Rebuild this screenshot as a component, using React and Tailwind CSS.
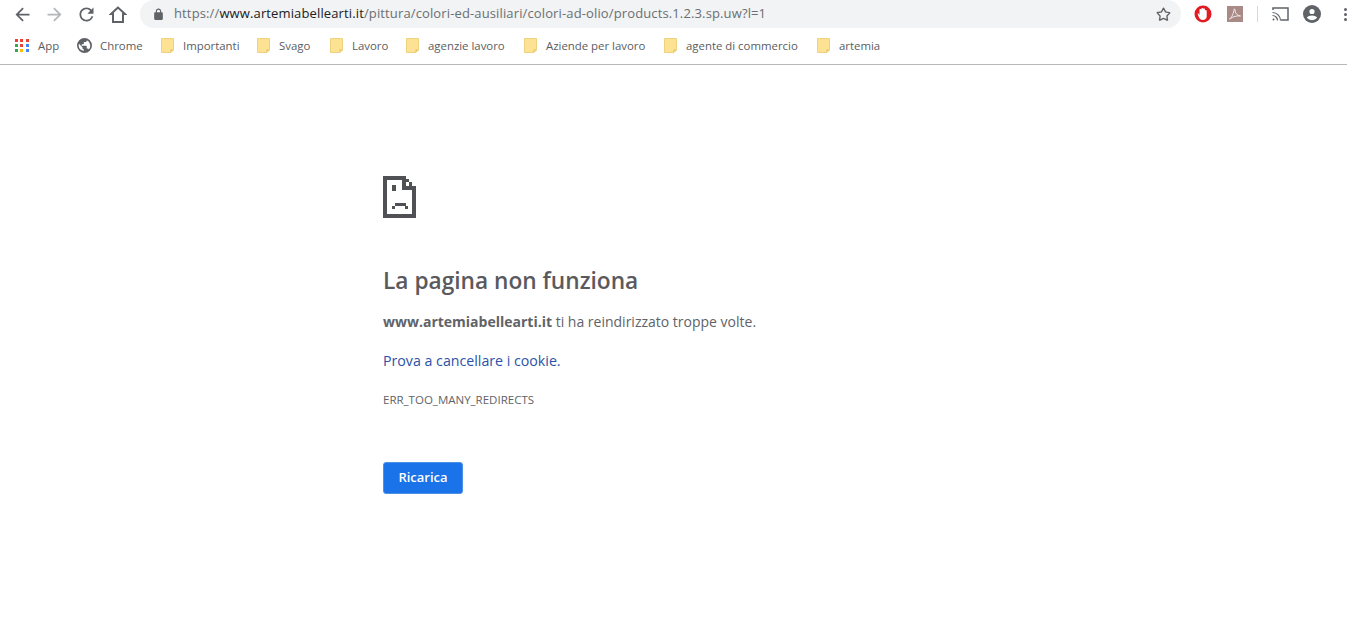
import { Star } from 'lucide-react'

const bookmarks = [
    { label: 'Importanti', gap: 'w-[74px]' },
    { label: 'Svago', gap: 'w-[51px]' },
    { label: 'Lavoro', gap: 'w-[54px]' },
    { label: 'agenzie lavoro', gap: 'w-[96px]' },
    { label: 'Aziende per lavoro', gap: 'w-[118px]' },
    { label: 'agente di commercio', gap: 'w-[131px]' },
    { label: 'artemia', gap: 'w-[50px]' },
]

function Glyph({ d, size = 21, className = '' }) {
    return (
        <svg width={size} height={size} viewBox="0 0 24 24" fill="currentColor" className={`shrink-0 ${className}`}>
            <path d={d} />
        </svg>
    )
}

function Folder() {
    return (
        <svg width="13" height="15" viewBox="0 0 13 15" className="shrink-0">
            <path d="M.5.5h12v11.500l-2.500 2.500H.5z" fill="#fde293" stroke="#eed27f" />
            <path d="M9.500 11.500h3l-3 3z" fill="#e3c565" />
        </svg>
    )
}

function AppsGrid() {
    const colors = ['#ea4335', '#ea4335', '#ea4335', '#34a853', '#ea4335', '#4285f4', '#34a853', '#fbbc05', '#4285f4']
    return (
        <div className="grid grid-cols-3 gap-[2px] w-[14px] shrink-0">
            {colors.map((c, i) => <span key={i} className="w-[3px] h-[3px]" style={{ background: c }} />)}
        </div>
    )
}

function Globe() {
    return (
        <svg width="15" height="15" viewBox="0 0 24 24" fill="#5f6368" className="shrink-0">
            <path d="M12 0a12 12 0 1 0 0 24 12 12 0 0 0 0-24zM2.600 12c0-1 .2-2 .5-3l5.600 5.700v1.200c0 1.300 1 2.300 2.300 2.300v2.200A9.400 9.400 0 0 1 2.600 12zm16.300 6.400a2.300 2.300 0 0 0-2.200-1.600h-1.200v-3.500c0-.6-.5-1.100-1.100-1.100H7.500V10h2.300c.6 0 1.200-.5 1.200-1.100V6.500h2.300c1.300 0 2.300-1 2.300-2.300v-.5a9.400 9.400 0 0 1 3.300 14.700z" />
        </svg>
    )
}

function SadPage() {
    return (
        <svg width="33" height="42" viewBox="0 0 33 42" fill="#505154" shapeRendering="crispEdges">
            <rect x="0" y="0" width="23" height="4" />
            <rect x="0" y="0" width="4" height="42" />
            <rect x="0" y="38" width="33" height="4" />
            <rect x="29" y="10" width="4" height="32" />
            <rect x="19" y="0" width="4" height="14" />
            <rect x="19" y="10" width="14" height="4" />
            <rect x="23" y="3" width="3" height="3" />
            <rect x="26" y="6" width="3" height="4" />
            <rect x="9" y="9" width="4" height="6" />
            <rect x="12" y="27" width="11" height="3" />
            <rect x="9" y="30" width="3" height="3" />
            <rect x="22" y="30" width="3" height="3" />
        </svg>
    )
}

function HomeOutline() {
    return (
        <svg width="18" height="17" viewBox="0 0 18 17" fill="none" stroke="#5f6368" strokeWidth="2" className="shrink-0">
            <path d="M9 1.500 2 8h2v8h10V8h2z" />
        </svg>
    )
}

function StopBadge() {
    return (
        <svg width="18" height="18" viewBox="0 0 18 18">
            <circle cx="9" cy="9" r="8.500" fill="#e01b22" />
            <path d="M3.500 8.500h1l1 1.500V5a.9.9 0 0 1 1.800 0V4a.9.9 0 0 1 1.800 0v.2a.9.9 0 0 1 1.800 0V6a.9.9 0 0 1 1.800 0v5.500c0 2-1.700 3.500-3.800 3.500-2.500 0-3.500-1.500-4.200-3.200z" fill="#fff" />
        </svg>
    )
}

function AcrobatBadge() {
    return (
        <svg width="16" height="16" viewBox="0 0 16 16">
            <rect width="16" height="16" fill="#a98a87" />
            <path d="M2.500 13c2-1.200 3.500-4 4.500-9c.2-1.500 1-1.500 1 0c0 3 2 5.500 5.500 6c-3.500-.5-7.500.5-11 3z" fill="none" stroke="#f3e8e6" strokeWidth="1" />
        </svg>
    )
}

function CastIcon() {
    return (
        <svg width="17" height="14" viewBox="0 0 17 14" fill="none" stroke="#5f6368" strokeWidth="1.500">
            <path d="M1 3V1h15v12H9" />
            <path d="M.5 5.500a8 8 0 0 1 8 8M.5 8.500a5 5 0 0 1 5 5" strokeWidth="1.200" />
            <circle cx="1.500" cy="12.500" r="1" fill="#5f6368" stroke="none" />
        </svg>
    )
}

function Account() {
    return (
        <svg width="18" height="18" viewBox="0 0 18 18">
            <circle cx="9" cy="9" r="9" fill="#5f6368" />
            <circle cx="9" cy="6.500" r="2.600" fill="#fff" />
            <path d="M3.800 12.800c1-1.600 3.200-2.400 5.200-2.400s4.200.8 5.200 2.400a6.800 6.800 0 0 1-10.400 0z" fill="#fff" />
        </svg>
    )
}

export default function App() {
    return (
        <div className="min-h-screen bg-white font-['Open_Sans',sans-serif] overflow-hidden">
            <div className="h-[65px] border-b border-[#b8b8b8]">
                <div className="flex items-center h-[28px]">
                    <div className="w-[140px] flex items-center shrink-0 text-[#5f6368]">
                        <Glyph className="ml-[12px]" d="M20 11H7.830l5.590-5.590L12 4l-8 8 8 8 1.410-1.410L7.830 13H20v-2z" />
                        <Glyph className="ml-[11px] text-[#b4b6b8]" d="M12 4l-1.410 1.410L16.170 11H4v2h12.170l-5.580 5.590L12 20l8-8z" />
                        <Glyph className="ml-[11px]" d="M17.650 6.350A7.958 7.958 0 0 0 12 4c-4.420 0-7.990 3.580-7.990 8s3.570 8 7.990 8c3.730 0 6.840-2.550 7.730-6h-2.080A5.990 5.990 0 0 1 12 18c-3.310 0-6-2.690-6-6s2.690-6 6-6c1.660 0 3.140.69 4.220 1.780L13 11h7V4l-2.350 2.350z" />
                        <div className="ml-[12px]"><HomeOutline /></div>
                    </div>
                    <div className="w-[1041px] h-[28px] rounded-full bg-[#f1f3f4] flex items-center shrink-0">
                        <Glyph size={13} className="ml-[12px] text-[#5f6368]" d="M18 8h-1V6c0-2.760-2.240-5-5-5S7 3.240 7 6v2H6c-1.100 0-2 .9-2 2v10c0 1.100.9 2 2 2h12c1.100 0 2-.9 2-2V10c0-1.100-.9-2-2-2zM9 6c0-1.660 1.340-3 3-3s3 1.340 3 3v2H9V6z" />
                        <span className="ml-[9px] text-[13px] text-[#6b6f73] tracking-[0.13px] whitespace-nowrap">
                            https://<span className="text-[#202124]">www.artemiabellearti.it</span>/pittura/colori-ed-ausiliari/colori-ad-olio/products.1.2.3.sp.uw?l=1
                        </span>
                        <Star size={15} strokeWidth={2.200} className="ml-auto mr-[10px] text-[#5f6368]" />
                    </div>
                    <div className="flex items-center ml-[13px]">
                        <StopBadge />
                        <div className="ml-[15px]"><AcrobatBadge /></div>
                        <div className="ml-[14px] w-px h-[16px] bg-[#d8d8d8]" />
                        <div className="ml-[14px]"><CastIcon /></div>
                        <div className="ml-[14px]"><Account /></div>
                        <div className="ml-[23px] flex flex-col gap-[2px]">
                            <span className="w-[3px] h-[3px] rounded-full bg-[#5f6368]" />
                            <span className="w-[3px] h-[3px] rounded-full bg-[#5f6368]" />
                            <span className="w-[3px] h-[3px] rounded-full bg-[#5f6368]" />
                        </div>
                    </div>
                </div>
                <div className="flex items-center h-[36px] text-[11.400px] text-[#5a5d61] whitespace-nowrap pb-[1px]">
                    <div className="ml-[15px]"><AppsGrid /></div>
                    <span className="ml-[9px] w-[39px]">App</span>
                    <Globe />
                    <span className="ml-[8px] w-[61px]">Chrome</span>
                    {bookmarks.map(b => (
                        <div key={b.label} className="flex items-center">
                            <Folder />
                            <span className={`ml-[9px] ${b.gap}`}>{b.label}</span>
                        </div>
                    ))}
                </div>
            </div>

            <main className="pl-[383px] pt-[111px] text-[#5f6368]">
                <SadPage />
                <h1 className="mt-[48px] text-[22.700px] leading-[30px] font-semibold text-[#5a5a5e]">La pagina non funziona</h1>
                <p className="mt-[16px] text-[14px] leading-[20px]">
                    <strong className="font-bold">www.artemiabellearti.it</strong> ti ha reindirizzato troppe volte.
                </p>
                <p className="mt-[19px] text-[14.200px] leading-[20px] text-[#2a52a8]">Prova a cancellare i cookie.</p>
                <p className="mt-[21px] text-[11.500px] leading-[16px]">ERR_TOO_MANY_REDIRECTS</p>
                <button className="mt-[54px] w-[80px] h-[32px] rounded-[3px] bg-[#1a73e8] border border-[#4d90e8] text-white text-[13px] font-semibold">Ricarica</button>
            </main>
        </div>
    )
}
